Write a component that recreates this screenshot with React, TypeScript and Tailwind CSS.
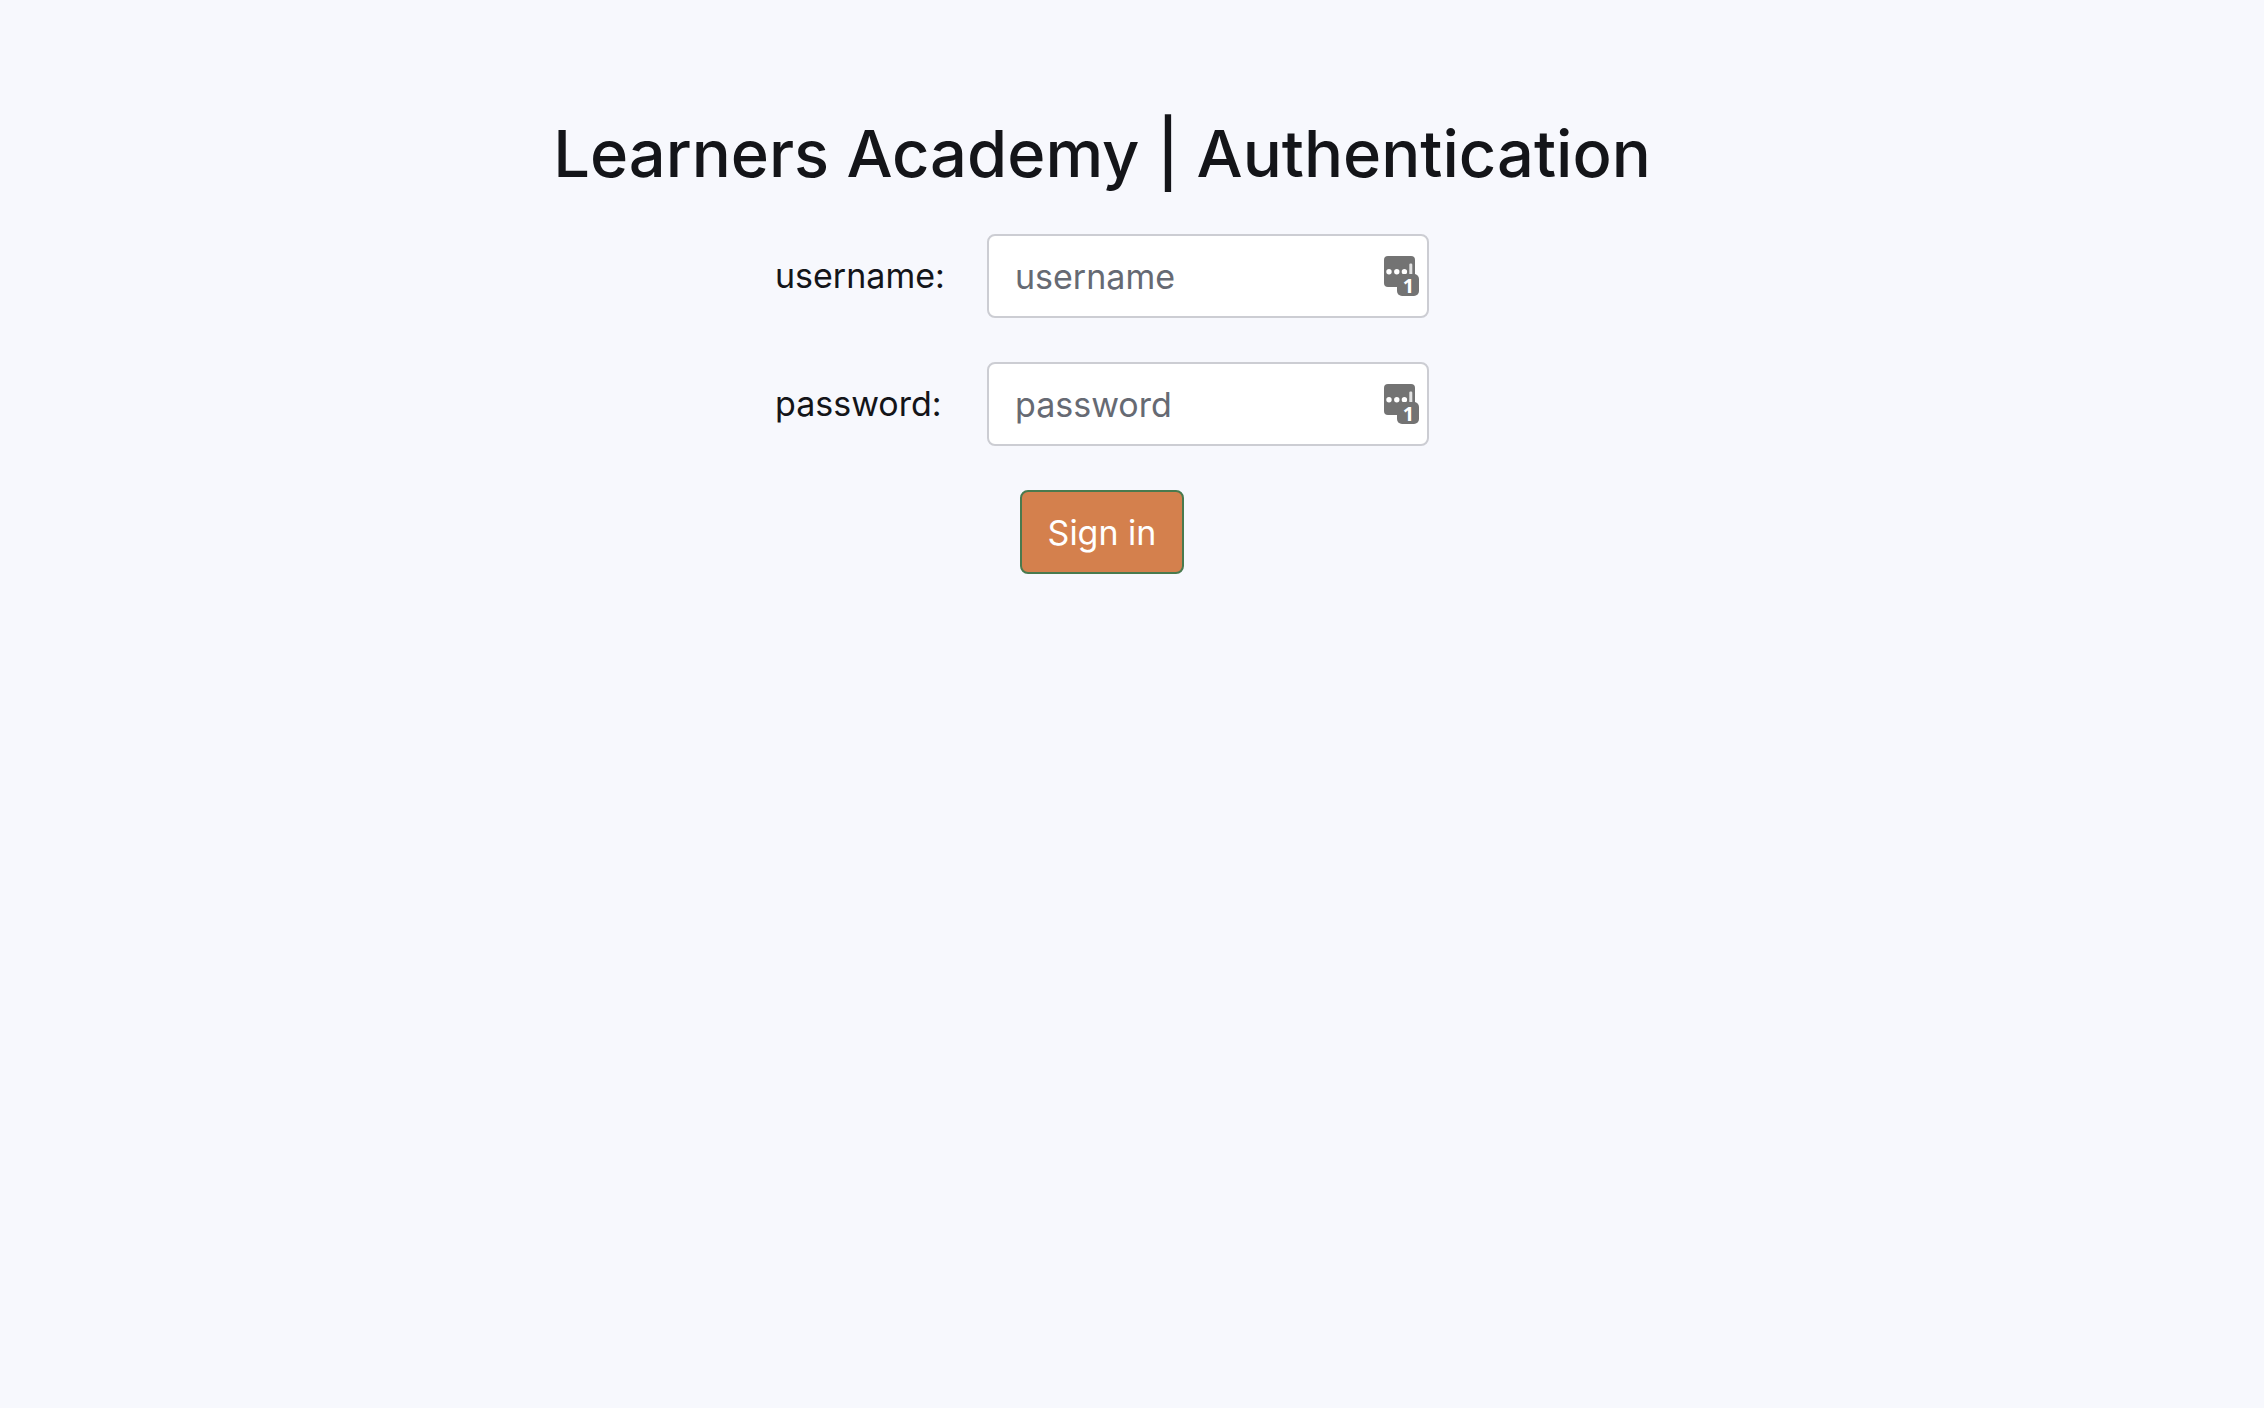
import React from "react";

function ManagerBadge() {
  return (
    <svg viewBox="0 0 35 40" className="pointer-events-none absolute top-[22px] right-[10px] h-10 w-[35px] overflow-visible" aria-hidden="true">
      <rect x="0" y="0" width="31" height="31" rx="4" fill="#737373" />
      <circle cx="5" cy="15.7" r="2.7" fill="#fff" />
      <circle cx="12.8" cy="15.7" r="2.7" fill="#fff" />
      <circle cx="20.4" cy="15.7" r="2.7" fill="#fff" />
      <rect x="25.3" y="7.5" width="3" height="14" rx="1.2" fill="#e3e3e3" />
      <rect x="13" y="18" width="22" height="22" rx="5" fill="#737373" />
      <text x="24.5" y="36.5" textAnchor="middle" fontFamily="Noto Sans, sans-serif" fontSize="20" fontWeight="700" fill="#fff">1</text>
    </svg>
  );
}

function Field({ id, type }: { id: string; type: string }) {
  return (
    <div className="flex items-center">
      <label htmlFor={id} className="w-[212px] text-[34px] leading-[52px]">{id}:</label>
      <div className="relative">
        <input
          id={id}
          type={type}
          placeholder={id}
          className="h-[84px] w-[442px] rounded-lg border-2 border-[#cccdd3] bg-white px-[26px] text-[34px] placeholder:text-[#666a73]"
        />
        <ManagerBadge />
      </div>
    </div>
  );
}

export default function App() {
  return (
    <main className="min-h-screen bg-[#f7f8fd] pt-[113px] pr-[60px] font-['Inter',sans-serif] text-[#141519]">
      <h1 className="text-center text-[65px] leading-[82px] font-medium">Learners Academy | Authentication</h1>
      <form className="mt-[39px] flex flex-col items-center gap-11">
        <Field id="username" type="text" />
        <Field id="password" type="password" />
        <button
          type="button"
          className="h-[84px] rounded-lg border-2 border-[#497a4e] bg-[#d4804d] px-[26px] text-[34px] text-white"
        >
          Sign in
        </button>
      </form>
    </main>
  );
}
